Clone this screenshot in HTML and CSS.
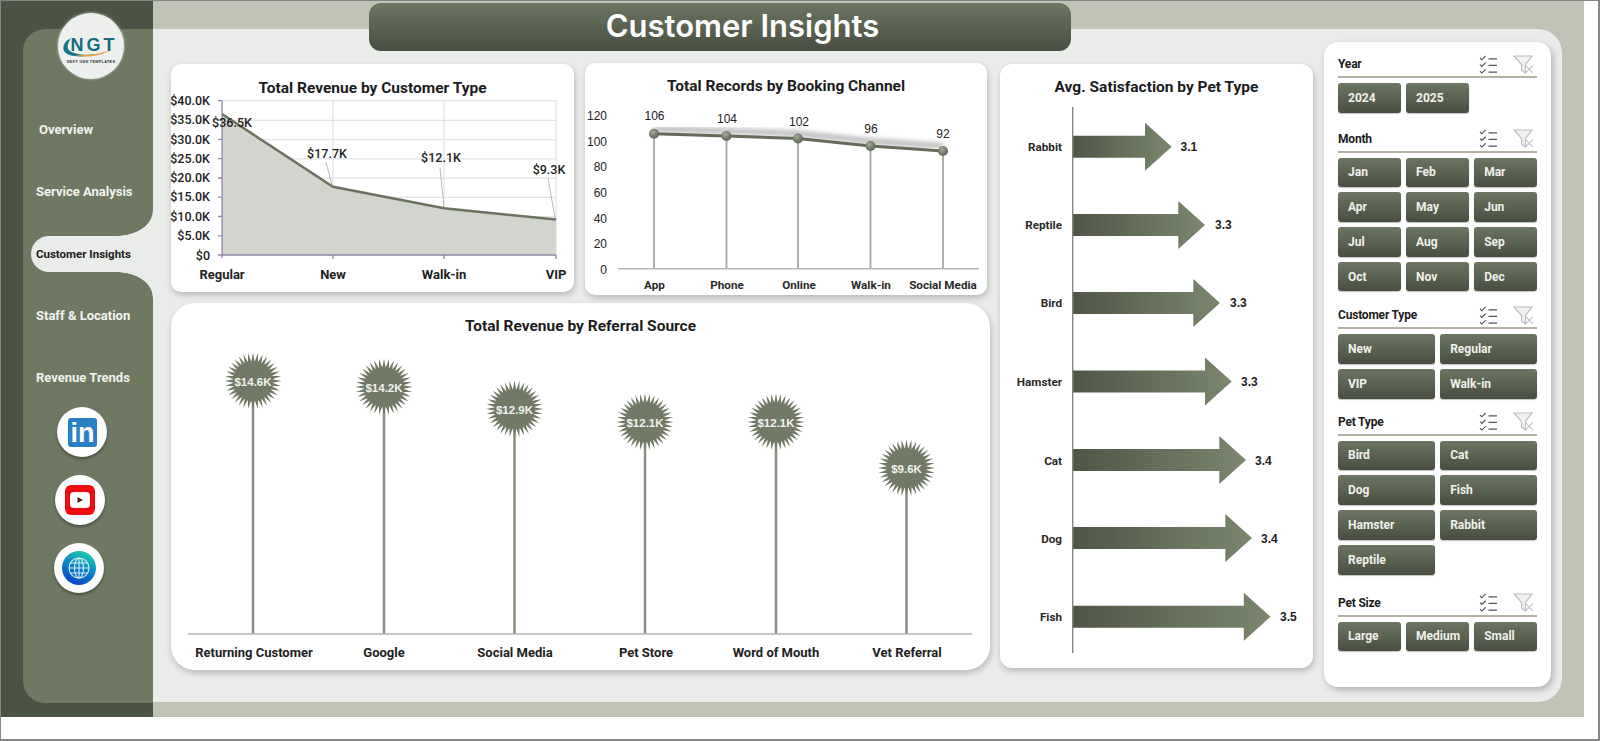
FILE: index.html
```html
<!doctype html>
<html lang="en">
    <head>
        <meta charset="UTF-8" />
        <meta name="viewport" content="width=device-width, initial-scale=1.0" />
        <title>Customer Insights</title>
        <link rel="stylesheet" href="styles.css">
    </head>
    <body>
        <!-- Shared shapes -->
        <svg class="defs" width="0" height="0">
            <defs>
                <path id="spike" d="M-28.5 0L-18 -1.9L-18 1.9ZM28.5 0L18 -1.9L18 1.9Z" />
                <g id="star">
                    <circle r="20" />
                    <use href="#spike" />
                    <use href="#spike" transform="rotate(10)" />
                    <use href="#spike" transform="rotate(20)" />
                    <use href="#spike" transform="rotate(30)" />
                    <use href="#spike" transform="rotate(40)" />
                    <use href="#spike" transform="rotate(50)" />
                    <use href="#spike" transform="rotate(60)" />
                    <use href="#spike" transform="rotate(70)" />
                    <use href="#spike" transform="rotate(80)" />
                    <use href="#spike" transform="rotate(90)" />
                    <use href="#spike" transform="rotate(100)" />
                    <use href="#spike" transform="rotate(110)" />
                    <use href="#spike" transform="rotate(120)" />
                    <use href="#spike" transform="rotate(130)" />
                    <use href="#spike" transform="rotate(140)" />
                    <use href="#spike" transform="rotate(150)" />
                    <use href="#spike" transform="rotate(160)" />
                    <use href="#spike" transform="rotate(170)" />
                </g>
                <linearGradient id="arrow-fill" x1="0" x2="1" y1="0" y2="0">
                    <stop offset="0" stop-color="#4f5645" />
                    <stop offset="0.8" stop-color="#727d65" />
                    <stop offset="1" stop-color="#7b866d" />
                </linearGradient>
                <radialGradient id="marker-fill" cx="0.4" cy="0.35" r="0.7">
                    <stop offset="0" stop-color="#a3aa97" />
                    <stop offset="1" stop-color="#565d4c" />
                </radialGradient>
                <linearGradient id="globe-fill" x1="0.7" x2="0.3" y1="0" y2="1">
                    <stop offset="0" stop-color="#1fd0a6" />
                    <stop offset="0.5" stop-color="#0a80c8" />
                    <stop offset="1" stop-color="#0a42c4" />
                </linearGradient>
                <filter id="soft"><feGaussianBlur stdDeviation="2.5" /></filter>
                <symbol id="icon-multi" viewBox="0 0 20 20">
                    <path d="M1 3l2 2 4-4M1 10l2 2 4-4M1 17l2 2 4-4" fill="none" stroke="#444" stroke-width="1.1" />
                    <path d="M10 4h9M10 11h9M10 18h9" fill="none" stroke="#555" stroke-width="1.4" />
                </symbol>
                <symbol id="icon-clear" viewBox="0 0 22 20">
                    <path d="M1 1h19l-7 9v9l-4-3v-6z" fill="#f1f1f1" stroke="#bdbdbd" stroke-width="1.2" />
                    <path d="M13 11l8 8M21 11l-8 8" fill="none" stroke="#c4c4c4" stroke-width="1.2" />
                </symbol>
            </defs>
        </svg>

        <div class="frame">
            <div class="board">
                <h1 class="page-title">Customer Insights</h1>

                <aside class="rail">
                    <nav class="sidebar">
                        <div class="logo">
                            <svg width="60" height="50" viewBox="0 0 60 50">
                                <path d="M10 17C4 20 1 25 3 30C6 36 22 37 36 33C24 35 10 33 7 28C6 24 8 20 10 17Z" fill="#17778a" />
                                <path d="M14 34C26 38 42 34 52 28C42 32 28 35 14 34Z" fill="#e8a33c" />
                                <text class="logo-mark" x="33" y="29.5" text-anchor="middle">NGT</text>
                                <text class="logo-sub" x="30" y="42" text-anchor="middle">NEXT GEN TEMPLATES</text>
                            </svg>
                        </div>
                        <ul class="nav">
                            <li class="nav-item nav-overview">Overview</li>
                            <li class="nav-item">Service Analysis</li>
                            <li class="nav-item active">Customer Insights</li>
                            <li class="nav-item">Staff &amp; Location</li>
                            <li class="nav-item">Revenue Trends</li>
                        </ul>
                        <div class="social">
                            <a class="social-link linkedin">
                                <svg width="29" height="29" viewBox="0 0 29 29">
                                    <rect width="29" height="29" rx="3" fill="#2a80c4" />
                                    <text class="linkedin-mark" x="14.5" y="24" text-anchor="middle">in</text>
                                </svg>
                            </a>
                            <a class="social-link youtube">
                                <svg width="30" height="30" viewBox="0 0 30 30">
                                    <rect width="30" height="30" rx="6" fill="#ee0a10" />
                                    <rect x="5" y="7" width="20" height="16" rx="4" fill="#fff" />
                                    <path d="M12.5 12l5.5 3-5.5 3z" fill="#5a1a1a" />
                                </svg>
                            </a>
                            <a class="social-link globe">
                                <svg width="34" height="34" viewBox="0 0 34 34">
                                    <circle cx="17" cy="17" r="17" fill="url(#globe-fill)" />
                                    <g fill="none" stroke="#d5eef5" stroke-width="1.1">
                                        <circle cx="17" cy="17" r="10" />
                                        <ellipse cx="17" cy="17" rx="4.5" ry="10" />
                                        <path d="M17 7v20M7 17h20M8.5 12h17M8.5 22h17" />
                                    </g>
                                </svg>
                            </a>
                        </div>
                    </nav>
                </aside>

                <main class="panel">
                    <div class="charts">
                        <div class="charts-top">
                            <section class="card card-customer">
                                <h2 class="card-title">Total Revenue by Customer Type</h2>
                                <svg class="chart" width="403" height="194" viewBox="171 98 403 194">
                                    <g class="grid">
                                        <path d="M222 120.3H556M222 139.6H556M222 158.9H556M222 178.2H556M222 197.4H556M222 216.7H556M222 236H556M222 100.7H556" />
                                        <path d="M333 100.7V255M444 100.7V255M556 100.7V255" />
                                    </g>
                                    <path class="area" d="M222 114L333 186.7L444 208.3L556 219.5V255H222Z" />
                                    <path class="area-line" d="M222 114L333 186.7L444 208.3L556 219.5" />
                                    <path class="axis" d="M222 100.7V258M218 100.7H222M218 120H222M218 139.3H222M218 158.6H222M218 178H222M218 197.2H222M218 216.5H222M218 235.8H222M218 255H556M333 255V259M444 255V259M556 255V259" />
                                    <path class="leader" d="M326 162L332 185M440 168L444 207M548 178L555 218" />
                                    <g class="ticks" text-anchor="end">
                                        <text x="210" y="105">$40.0K</text>
                                        <text x="210" y="124">$35.0K</text>
                                        <text x="210" y="144">$30.0K</text>
                                        <text x="210" y="163">$25.0K</text>
                                        <text x="210" y="182">$20.0K</text>
                                        <text x="210" y="201">$15.0K</text>
                                        <text x="210" y="221">$10.0K</text>
                                        <text x="210" y="240">$5.0K</text>
                                        <text x="210" y="260">$0</text>
                                    </g>
                                    <g class="values" text-anchor="middle">
                                        <text x="232" y="127">$36.5K</text>
                                        <text x="327" y="158">$17.7K</text>
                                        <text x="441" y="162">$12.1K</text>
                                        <text x="549" y="174">$9.3K</text>
                                    </g>
                                    <g class="cats" text-anchor="middle">
                                        <text x="222" y="279">Regular</text>
                                        <text x="333" y="279">New</text>
                                        <text x="444" y="279">Walk-in</text>
                                        <text x="556" y="279">VIP</text>
                                    </g>
                                </svg>
                            </section>

                            <section class="card card-booking">
                                <h2 class="card-title">Total Records by Booking Channel</h2>
                                <svg class="chart" width="402" height="199" viewBox="585 96 402 199">
                                    <path class="stems" d="M654 134V269M726.5 136V269M798 138.5V269M870.5 146V269M943 151V269" />
                                    <path class="glow" filter="url(#soft)" d="M654 129L726.5 131L798 133.5L870.5 141L943 146" />
                                    <path class="base" d="M618 268.7H979" />
                                    <path class="trend" d="M654 133.7L726.5 136L798 138.5L870.5 146L943 151" />
                                    <g class="marker">
                                        <circle cx="654" cy="133.7" r="5" />
                                        <circle cx="726.5" cy="136" r="5" />
                                        <circle cx="798" cy="138.5" r="5" />
                                        <circle cx="870.5" cy="146" r="5" />
                                        <circle cx="943" cy="151" r="5" />
                                    </g>
                                    <g class="values-plain" text-anchor="end">
                                        <text x="607" y="120">120</text>
                                        <text x="607" y="146">100</text>
                                        <text x="607" y="171">80</text>
                                        <text x="607" y="197">60</text>
                                        <text x="607" y="223">40</text>
                                        <text x="607" y="248">20</text>
                                        <text x="607" y="274">0</text>
                                    </g>
                                    <g class="values-plain" text-anchor="middle">
                                        <text x="654.5" y="120">106</text>
                                        <text x="727" y="123">104</text>
                                        <text x="799" y="125.5">102</text>
                                        <text x="871" y="133">96</text>
                                        <text x="943" y="138">92</text>
                                    </g>
                                    <g class="cats-small" text-anchor="middle">
                                        <text x="654.5" y="289">App</text>
                                        <text x="727" y="289">Phone</text>
                                        <text x="799" y="289">Online</text>
                                        <text x="871" y="289">Walk-in</text>
                                        <text x="943" y="289">Social Media</text>
                                    </g>
                                </svg>
                            </section>
                        </div>

                        <section class="card card-referral">
                            <h2 class="card-title">Total Revenue by Referral Source</h2>
                            <svg class="chart" width="819" height="334" viewBox="171 336 819 334">
                                <path class="lollipop-stems" d="M253 381V634M384 387V634M514.5 409V634M645 422V634M776 422V634M906.5 468V634" />
                                <path class="base" d="M188 634H972" />
                                <g class="stars">
                                    <use href="#star" transform="translate(253 381)" />
                                    <use href="#star" transform="translate(384 387)" />
                                    <use href="#star" transform="translate(514.5 409)" />
                                    <use href="#star" transform="translate(645 422)" />
                                    <use href="#star" transform="translate(776 422)" />
                                    <use href="#star" transform="translate(906.5 468)" />
                                </g>
                                <g class="star-values" text-anchor="middle">
                                    <text x="253" y="386">$14.6K</text>
                                    <text x="384" y="392">$14.2K</text>
                                    <text x="514.5" y="414">$12.9K</text>
                                    <text x="645" y="427">$12.1K</text>
                                    <text x="776" y="427">$12.1K</text>
                                    <text x="906.5" y="473">$9.6K</text>
                                </g>
                                <g class="cats" text-anchor="middle">
                                    <text x="254" y="657">Returning Customer</text>
                                    <text x="384" y="657">Google</text>
                                    <text x="515" y="657">Social Media</text>
                                    <text x="646" y="657">Pet Store</text>
                                    <text x="776" y="657">Word of Mouth</text>
                                    <text x="907" y="657">Vet Referral</text>
                                </g>
                            </svg>
                        </section>
                    </div>

                    <section class="card card-satisfaction">
                        <h2 class="card-title">Avg. Satisfaction by Pet Type</h2>
                        <svg class="chart" width="313" height="571" viewBox="1000 97 313 571">
                            <g class="arrows">
                                <path d="M1073 135.7H1145V122.7L1171.7 146.7L1145 170.7V157.7H1073Z" />
                                <path d="M1073 214H1178.3V201L1205 225L1178.3 249V236H1073Z" />
                                <path d="M1073 292H1193.3V279L1220 303L1193.3 327V314H1073Z" />
                                <path d="M1073 370.5H1205V357.5L1231.7 381.5L1205 405.5V392.5H1073Z" />
                                <path d="M1073 449H1219.3V436L1246 460L1219.3 484V471H1073Z" />
                                <path d="M1073 527H1225.3V514L1252 538L1225.3 562V549H1073Z" />
                                <path d="M1073 605.7H1243.8V592.7L1270.5 616.7L1243.8 640.7V627.7H1073Z" />
                            </g>
                            <path class="pet-axis" d="M1072.7 107V653" />
                            <g class="cats-small" text-anchor="end">
                                <text x="1062" y="151">Rabbit</text>
                                <text x="1062" y="229">Reptile</text>
                                <text x="1062" y="307">Bird</text>
                                <text x="1062" y="386">Hamster</text>
                                <text x="1062" y="465">Cat</text>
                                <text x="1062" y="543">Dog</text>
                                <text x="1062" y="621">Fish</text>
                            </g>
                            <g class="values-plain pet-values">
                                <text x="1180.5" y="151">3.1</text>
                                <text x="1215" y="229">3.3</text>
                                <text x="1230" y="307">3.3</text>
                                <text x="1241" y="386">3.3</text>
                                <text x="1255" y="465">3.4</text>
                                <text x="1261" y="543">3.4</text>
                                <text x="1280" y="621">3.5</text>
                            </g>
                        </svg>
                    </section>

                    <aside class="slicers">
                        <div class="slicer slicer-year">
                            <div class="slicer-head">
                                <span class="slicer-name">Year</span>
                                <svg class="tool tool-multi"><use href="#icon-multi" /></svg>
                                <svg class="tool tool-clear"><use href="#icon-clear" /></svg>
                            </div>
                            <div class="slicer-grid three">
                                <button class="chip">2024</button>
                                <button class="chip">2025</button>
                            </div>
                        </div>
                        <div class="slicer slicer-month">
                            <div class="slicer-head">
                                <span class="slicer-name">Month</span>
                                <svg class="tool tool-multi"><use href="#icon-multi" /></svg>
                                <svg class="tool tool-clear"><use href="#icon-clear" /></svg>
                            </div>
                            <div class="slicer-grid three">
                                <button class="chip">Jan</button>
                                <button class="chip">Feb</button>
                                <button class="chip">Mar</button>
                                <button class="chip">Apr</button>
                                <button class="chip">May</button>
                                <button class="chip">Jun</button>
                                <button class="chip">Jul</button>
                                <button class="chip">Aug</button>
                                <button class="chip">Sep</button>
                                <button class="chip">Oct</button>
                                <button class="chip">Nov</button>
                                <button class="chip">Dec</button>
                            </div>
                        </div>
                        <div class="slicer slicer-customer">
                            <div class="slicer-head">
                                <span class="slicer-name">Customer Type</span>
                                <svg class="tool tool-multi"><use href="#icon-multi" /></svg>
                                <svg class="tool tool-clear"><use href="#icon-clear" /></svg>
                            </div>
                            <div class="slicer-grid two">
                                <button class="chip">New</button>
                                <button class="chip">Regular</button>
                                <button class="chip">VIP</button>
                                <button class="chip">Walk-in</button>
                            </div>
                        </div>
                        <div class="slicer slicer-pet">
                            <div class="slicer-head">
                                <span class="slicer-name">Pet Type</span>
                                <svg class="tool tool-multi"><use href="#icon-multi" /></svg>
                                <svg class="tool tool-clear"><use href="#icon-clear" /></svg>
                            </div>
                            <div class="slicer-grid two">
                                <button class="chip">Bird</button>
                                <button class="chip">Cat</button>
                                <button class="chip">Dog</button>
                                <button class="chip">Fish</button>
                                <button class="chip">Hamster</button>
                                <button class="chip">Rabbit</button>
                                <button class="chip">Reptile</button>
                            </div>
                        </div>
                        <div class="slicer slicer-size">
                            <div class="slicer-head">
                                <span class="slicer-name">Pet Size</span>
                                <svg class="tool tool-multi"><use href="#icon-multi" /></svg>
                                <svg class="tool tool-clear"><use href="#icon-clear" /></svg>
                            </div>
                            <div class="slicer-grid three">
                                <button class="chip">Large</button>
                                <button class="chip">Medium</button>
                                <button class="chip">Small</button>
                            </div>
                        </div>
                    </aside>
                </main>
            </div>
        </div>
    </body>
</html>
```
FILE: styles.css
```css
:root {
    --color-band: #bfc4b6;
    --color-rail: #4b5342;
    --color-side: #6f7961;
    --color-panel: #e9ece8;
    --color-text: #1c1c1c;
    --color-chip-top: #6c7661;
    --color-chip-bottom: #484e40;
}

* {
    margin: 0;
    padding: 0;
    box-sizing: border-box;
}

body {
    font-family: "Roboto", "Liberation Sans", sans-serif;
    color: var(--color-text);
    background-color: #fff;
}

.defs {
    position: absolute;
}

.frame {
    width: 1600px;
    height: 741px;
    background-color: #fff;
    border: solid #858585;
    border-width: 1px 2px 2px 1px;
}

.board {
    position: relative;
    display: flex;
    width: 1583px;
    height: 716px;
    background-color: var(--color-band);
}

.page-title {
    position: absolute;
    top: 2px;
    left: 368px;
    width: 702px;
    height: 48px;
    padding-left: 45px;
    border-radius: 12px;
    background: linear-gradient(var(--color-chip-top), var(--color-chip-bottom));
    color: #fff;
    font-family: "Inter", sans-serif;
    font-size: 31px;
    font-weight: 600;
    line-height: 45px;
    text-align: center;
    z-index: 2;
}

/* Left rail */
.rail {
    width: 152px;
    flex-shrink: 0;
    padding: 28px 0 14px 22px;
    background-color: var(--color-rail);
}

.sidebar {
    display: flex;
    flex-direction: column;
    height: 100%;
    border-radius: 22px 0 0 22px;
    background-color: var(--color-side);
}

.logo {
    display: flex;
    align-items: center;
    justify-content: center;
    width: 66px;
    height: 66px;
    margin: -16px 0 0 35px;
    border-radius: 50%;
    background-color: #eef0ee;
    box-shadow: 0 0 3px rgba(255, 255, 255, 0.8), 0 1px 3px rgba(0, 0, 0, 0.2);
}

.logo-mark {
    font-family: "Liberation Sans", sans-serif;
    font-size: 18px;
    font-weight: 700;
    letter-spacing: 3px;
    fill: #156b7f;
}

.logo-sub {
    font-family: "Liberation Sans", sans-serif;
    font-size: 3.8px;
    font-weight: 700;
    letter-spacing: 0.3px;
    fill: #333;
}

.nav {
    list-style: none;
    margin-top: 33px;
}

.nav-item {
    position: relative;
    height: 36px;
    margin-bottom: 26px;
    padding-left: 13px;
    color: #f2f3ee;
    font-size: 13px;
    font-weight: 700;
    line-height: 36px;
}

.nav-overview {
    padding-left: 16px;
}

.nav-item.active {
    margin-left: 8px;
    padding-left: 5px;
    border-radius: 18px 0 0 18px;
    background-color: var(--color-panel);
    color: var(--color-text);
    font-size: 11.5px;
}

.nav-item.active::before,
.nav-item.active::after {
    content: "";
    position: absolute;
    right: 0;
    width: 36px;
    height: 25px;
}

.nav-item.active::before {
    bottom: 100%;
    background: radial-gradient(ellipse 36px 25px at 0 0, transparent 98%, var(--color-panel) 100%);
}

.nav-item.active::after {
    top: 100%;
    background: radial-gradient(ellipse 36px 25px at 0 100%, transparent 98%, var(--color-panel) 100%);
}

.social {
    display: flex;
    flex-direction: column;
    gap: 18px;
    margin-top: -15px;
}

.social-link {
    display: flex;
    align-items: center;
    justify-content: center;
    width: 50px;
    height: 50px;
    border-radius: 50%;
    background-color: #fff;
    box-shadow: 0 2px 3px rgba(0, 0, 0, 0.35);
}

.linkedin {
    margin-left: 34px;
}

.youtube {
    margin-left: 32px;
}

.globe {
    margin-left: 31px;
}

.linkedin-mark {
    font-family: "Liberation Sans", sans-serif;
    font-size: 27px;
    font-weight: 700;
    fill: #fff;
}

/* Main panel */
.panel {
    display: flex;
    align-items: flex-start;
    gap: 10px;
    flex: 1;
    margin: 28px 22px 15px 0;
    padding: 13px 0 0 18px;
    border-radius: 0 24px 24px 0;
    background-color: var(--color-panel);
}

.charts {
    width: 819px;
    flex-shrink: 0;
    margin-top: 21px;
}

.charts-top {
    display: flex;
    align-items: flex-start;
    gap: 11px;
}

.card {
    background-color: #fff;
    box-shadow: 1px 3px 6px rgba(0, 0, 0, 0.22);
}

.card-title {
    font-size: 15.5px;
    font-weight: 700;
    line-height: 20px;
    text-align: center;
}

.chart {
    display: block;
    overflow: visible;
}

.card-customer {
    width: 403px;
    height: 228px;
    margin-top: 1px;
    padding-top: 14px;
    border-radius: 10px;
}

.card-booking {
    width: 402px;
    height: 232px;
    padding-top: 13px;
    border-radius: 10px;
}

.card-referral {
    width: 819px;
    height: 367px;
    margin-top: 8px;
    padding-top: 13px;
    border-radius: 24px;
}

.card-satisfaction {
    width: 313px;
    height: 604px;
    margin-top: 22px;
    padding-top: 13px;
    border-radius: 12px;
}

/* Chart parts */
.grid path {
    fill: none;
    stroke: #e2e3e6;
    stroke-width: 1.2;
}

.area {
    fill: #d2d5cd;
}

.area-line {
    fill: none;
    stroke: #6c7260;
    stroke-width: 2.5;
}

.axis {
    fill: none;
    stroke: #8f88a8;
    stroke-width: 1.3;
}

.leader {
    fill: none;
    stroke: #a8a8a8;
    stroke-width: 0.8;
}

.ticks text,
.values text {
    font-size: 12.5px;
    font-weight: 500;
    fill: #222;
}

.cats text {
    font-size: 13px;
    font-weight: 700;
    fill: #222;
}

.cats-small text {
    font-size: 11.7px;
    font-weight: 700;
    fill: #2a2a2a;
}

.values-plain text {
    font-family: "Liberation Sans", sans-serif;
    font-size: 12px;
    fill: #222;
}

.pet-values text {
    font-weight: 700;
}

.stems {
    fill: none;
    stroke: #acb0a7;
    stroke-width: 2;
}

.glow {
    fill: none;
    stroke: #b0b0b0;
    stroke-width: 5;
}

.base {
    fill: none;
    stroke: #b4b6b0;
    stroke-width: 1.5;
}

.trend {
    fill: none;
    stroke: #646c59;
    stroke-width: 3;
}

.marker circle {
    fill: url(#marker-fill);
}

.lollipop-stems {
    fill: none;
    stroke: #8a8e7e;
    stroke-width: 2.5;
}

.stars {
    fill: #727a66;
}

.star-values text {
    font-family: "Liberation Sans", sans-serif;
    font-size: 11.5px;
    font-weight: 700;
    fill: #f1f2ed;
}

.arrows path {
    fill: url(#arrow-fill);
}

.pet-axis {
    fill: none;
    stroke: #7e7e7e;
    stroke-width: 1.3;
}

/* Slicer panel */
.slicers {
    width: 227px;
    height: 645px;
    margin-left: 1px;
    padding: 10px 14px 0;
    border-radius: 14px;
    background-color: #fff;
    box-shadow: 2px 3px 7px rgba(0, 0, 0, 0.25);
}

.slicer-head {
    display: flex;
    align-items: center;
    height: 26px;
    margin-bottom: 5px;
    border-bottom: 2px solid #b5b2a4;
}

.slicer-name {
    flex: 1;
    font-size: 12px;
    font-weight: 700;
    letter-spacing: -0.2px;
}

.tool-multi {
    width: 19px;
    height: 19px;
    margin-right: 15px;
}

.tool-clear {
    width: 21px;
    height: 19px;
    margin-right: 3px;
}

.slicer-grid {
    display: grid;
    gap: 5.3px;
    grid-auto-rows: 29.5px;
}

.slicer-grid.three {
    grid-template-columns: repeat(3, 1fr);
}

.slicer-grid.two {
    grid-template-columns: repeat(2, 1fr);
}

.slicer-month {
    margin-top: 14px;
}

.slicer-customer {
    margin-top: 12px;
}

.slicer-pet {
    margin-top: 11px;
}

.slicer-size {
    margin-top: 16px;
}

.chip {
    padding-left: 10px;
    border: none;
    border-radius: 3px;
    background: linear-gradient(var(--color-chip-top), var(--color-chip-bottom));
    color: #f0f1ea;
    font-family: inherit;
    font-size: 12px;
    font-weight: 700;
    text-align: left;
    cursor: pointer;
    box-shadow: 0 1px 1px rgba(0, 0, 0, 0.25);
}
```
